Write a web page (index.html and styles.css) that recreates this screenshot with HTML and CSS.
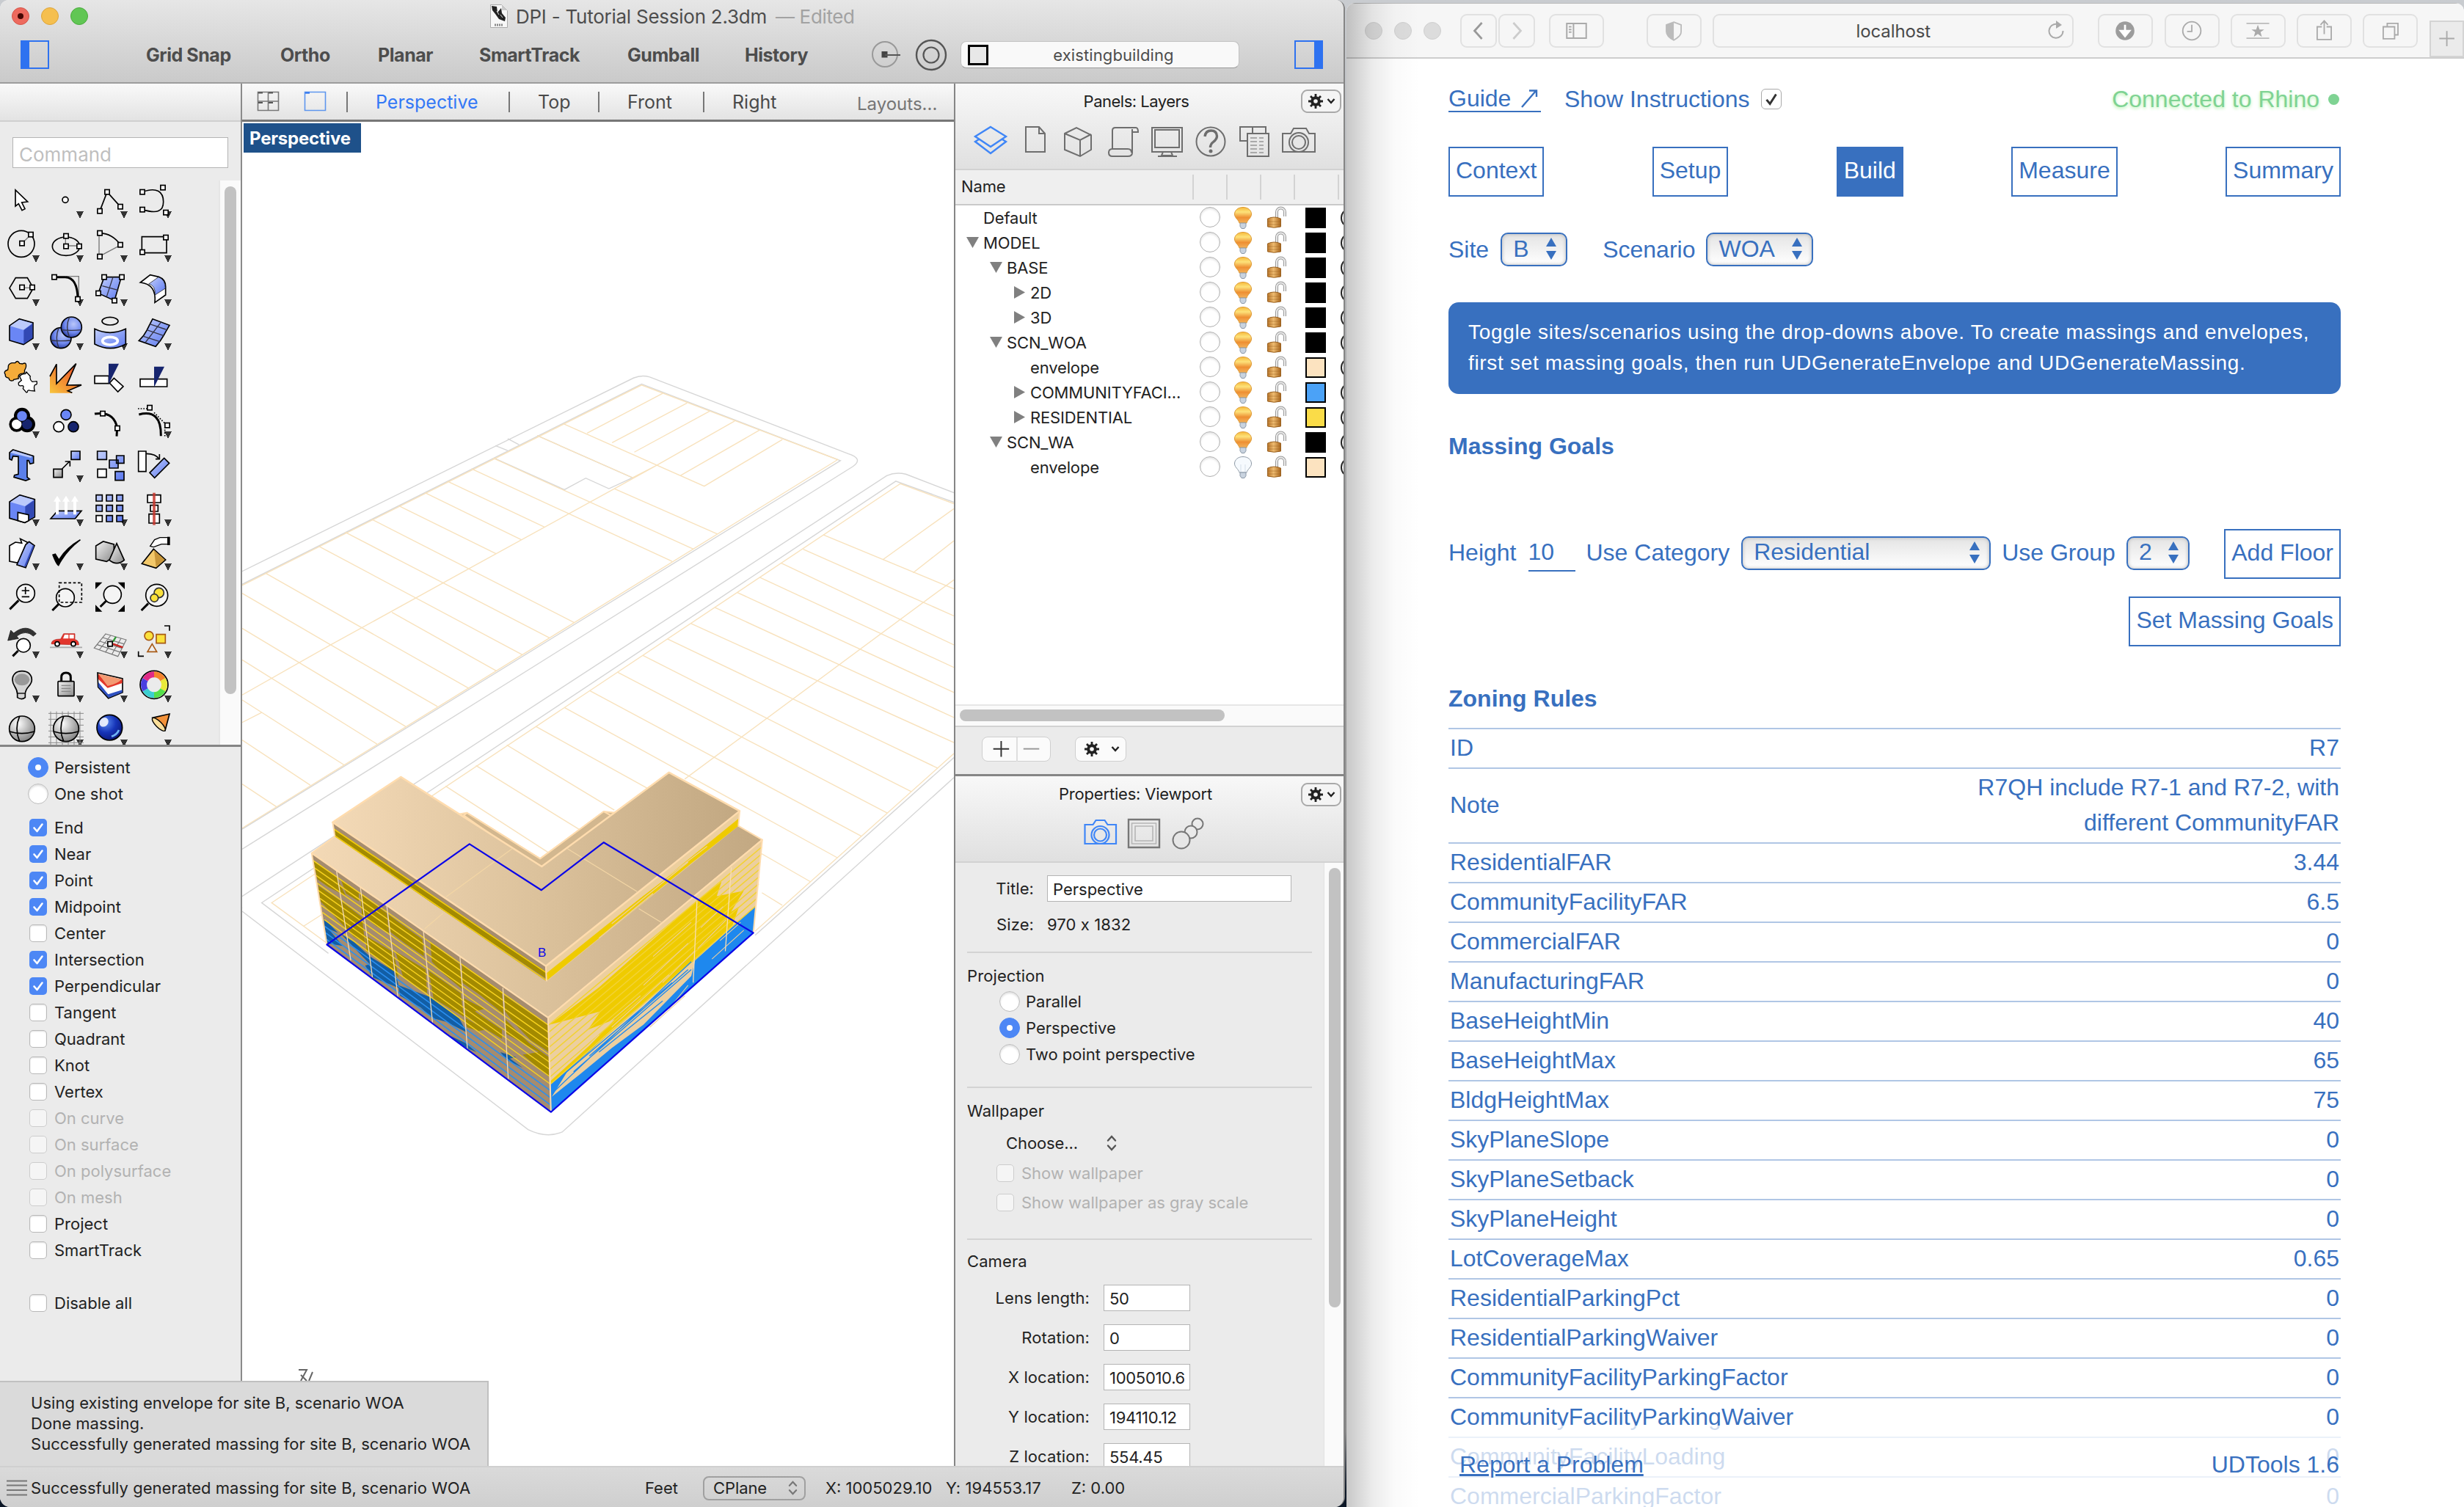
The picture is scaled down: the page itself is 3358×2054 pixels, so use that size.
FILE: index.html
```html
<!DOCTYPE html>
<html lang="en">
<head>
<meta charset="utf-8">
<title>DPI - Tutorial Session 2.3dm</title>
<link rel="stylesheet" href="styles.css">
</head>
<body>
<svg class="defs" width="0" height="0" aria-hidden="true">
  <defs>
    <linearGradient id="gBlue" x1="0" y1="0" x2="1" y2="1"><stop offset="0" stop-color="#c3cffb"/><stop offset="1" stop-color="#5b78f0"/></linearGradient>
    <radialGradient id="gBall" cx=".6" cy=".35" r=".7"><stop offset="0" stop-color="#b9c6fa"/><stop offset=".6" stop-color="#6f88ee"/><stop offset="1" stop-color="#25379a"/></radialGradient>
    <radialGradient id="gGray" cx=".35" cy=".3" r=".8"><stop offset="0" stop-color="#fff"/><stop offset="1" stop-color="#777"/></radialGradient>
    <radialGradient id="gDeep" cx=".35" cy=".3" r=".8"><stop offset="0" stop-color="#5a8bf0"/><stop offset=".5" stop-color="#1634b8"/><stop offset="1" stop-color="#0a1470"/></radialGradient>
    <linearGradient id="gFire" x1="1" y1="0" x2="0" y2="1"><stop offset=".2" stop-color="#ec5a2a"/><stop offset="1" stop-color="#f8c53c"/></linearGradient>
    <linearGradient id="gMetal" x1="0" y1="0" x2="1" y2="1"><stop offset="0" stop-color="#f4f4f4"/><stop offset="1" stop-color="#8a8a8a"/></linearGradient>
    <linearGradient id="gBulb" x1="0" y1="0" x2="0" y2="1"><stop offset="0" stop-color="#f6b93a"/><stop offset=".3" stop-color="#fde27a"/><stop offset=".65" stop-color="#ee8f33"/><stop offset="1" stop-color="#f3b25a"/></linearGradient>
    <linearGradient id="gLock" x1="0" y1="0" x2="1" y2="0"><stop offset="0" stop-color="#b8752a"/><stop offset=".45" stop-color="#eebb70"/><stop offset="1" stop-color="#a8651c"/></linearGradient>
    <linearGradient id="gRoof" x1="0" y1="0" x2="1" y2="0"><stop offset="0" stop-color="#f3d9b6"/><stop offset=".5" stop-color="#dcc29c"/><stop offset="1" stop-color="#c2a882"/></linearGradient>
    <symbol id="h" viewBox="0 0 24 24" overflow="visible"><rect x="2.5" y="2.5" width="19" height="19" fill="#fff" stroke="#000" stroke-width="5"/></symbol>
    <symbol id="gear" viewBox="0 0 20 20"><path d="M8.600 0h2.800v4H8.600zM8.600 16h2.800v4H8.600zM0 8.600h4v2.800H0zM16 8.600h4v2.800h-4zM2 4l2-2 3 3-2 2zM13 15l2-2 3 3-2 2zM2 16l3-3 2 2-3 3zM13 5l3-3 2 2-3 3z" fill="#222"/><circle cx="10" cy="10" r="4.800" fill="none" stroke="#222" stroke-width="4"/></symbol>
    <symbol id="chev" viewBox="0 0 12 10"><path d="M1.500 2l4.500 5L10.500 2" fill="none" stroke="#222" stroke-width="2.400"/></symbol>
    <symbol id="bulb" viewBox="0 0 26 32"><path d="M13 1.500C6.500 1.500 1.500 5.500 1.500 11c0 5 5.500 7.500 6.500 12h10c1-4.500 6.500-7 6.500-12 0-5.500-5-9.500-11.500-9.500z" fill="url(#gBulb)" stroke="#dd9a35"/><path d="M9 23h8v4.500l-2 3h-4l-2-3z" fill="#c9d3df" stroke="#8c99a8"/></symbol>
    <symbol id="bulboff" viewBox="0 0 26 32"><path d="M13 1.500C6.500 1.500 1.500 5.500 1.500 11c0 5 5.500 7.500 6.500 12h10c1-4.500 6.500-7 6.500-12 0-5.500-5-9.500-11.500-9.500z" fill="#f6fafe" stroke="#8f9aa6"/><path d="M9 23h8v4.500l-2 3h-4l-2-3z" fill="#c9d3df" stroke="#8c99a8"/><path d="M10 22V12M16 22V12" stroke="#d5dfe9"/></symbol>
    <symbol id="lock" viewBox="0 0 28 32"><path d="M14 16V8a5.500 5.500 0 0 1 11 0v6" fill="none" stroke="#999" stroke-width="4"/><path d="M14 16V8a5.500 5.500 0 0 1 11 0v6" fill="none" stroke="#ececec" stroke-width="2"/><path d="M1.500 17q9-4 18 0v11q-9 2.500-18 0z" fill="url(#gLock)" stroke="#9a6222"/><path d="M2 21h17M2 25h17" stroke="#9a6222" opacity=".45"/></symbol>
    <symbol id="tick" viewBox="0 0 24 24"><path d="M6.500 12.500l4 4.500 7-9.500" fill="none" stroke="#fff" stroke-width="2.600" stroke-linecap="round" stroke-linejoin="round"/></symbol>
    <symbol id="updown" viewBox="0 0 14 22"><path d="M2 7.500l5-5.500 5 5.500M2 14.500l5 5.500 5-5.500" fill="none" stroke="currentColor" stroke-width="2.400" stroke-linecap="round"/></symbol>
    <symbol id="selarrows" viewBox="0 0 16 30"><path d="M8 0l7 12H1zM8 30l7-12H1z" fill="#3870bf"/></symbol>
  </defs>
</svg>

<div class="rhino">
  <header class="titlebar">
    <div class="title-row">
      <div class="lights"><i class="red"></i><i class="amber"></i><i class="green"></i></div>
      <svg class="doc-icon" viewBox="0 0 24 32"><path d="M.5.500h15l8 8v23H.5z" fill="#f7f7f7" stroke="#aaa"/><path d="M2 2l7 1 1 8 5-6 1 7 5 6-1 5-8-3-5-7-4-5z" fill="#222"/><path d="M9 9l3 5M14 14l3 4" stroke="#ddd"/><path d="M16 1v7h7z" fill="#ccc"/><path d="M6 28h11" stroke="#888" stroke-width="3" stroke-dasharray="2 1"/></svg>
      <span class="doc-title">DPI - Tutorial Session 2.3dm</span><span class="doc-edited">— Edited</span>
    </div>
    <div class="tool-row">
      <div class="pane-toggle left"></div>
      <span class="t1">Grid Snap</span><span class="t2">Ortho</span><span class="t3">Planar</span><span class="t4">SmartTrack</span><span class="t5">Gumball</span><span class="t6">History</span>
      <svg class="rec" viewBox="0 0 104 48"><circle cx="18" cy="23" r="17" fill="none" stroke="#999" stroke-width="2"/><rect x="13.500" y="19" width="8" height="8.500" fill="#444"/><path d="M18 24h21" stroke="#555" stroke-width="2"/><circle cx="81" cy="24" r="20" fill="none" stroke="#555" stroke-width="2.400"/><circle cx="81" cy="24" r="10.500" fill="none" stroke="#555" stroke-width="2.200"/></svg>
      <div class="layer-pill"><i></i><span>existingbuilding</span></div>
      <div class="pane-toggle right"></div>
    </div>
  </header>

  <main class="workspace">
    <aside class="sidebar">
      <div class="side-head"></div>
      <div class="command"><input type="text" placeholder="Command"></div>
      <div class="palette-wrap">
        <div class="palette">
          <svg viewBox="0 40 180 180"><path class="w" d="M63 88v66l13-10 14 27 12-6-13-26 24-3z"/></svg>
          <svg class="m" viewBox="180 40 180 180"><circle class="w" cx="267" cy="128" r="12"/></svg>
          <svg class="m" viewBox="360 40 180 180"><path class="k" d="M408 174l30-78 54 60"/><use href="#h" x="396" y="162" width="24" height="24"/><use href="#h" x="426" y="84" width="24" height="24"/><use href="#h" x="480" y="144" width="24" height="24"/></svg>
          <svg class="m" viewBox="540 40 180 180"><path class="k" d="M582 96c60-22 86 0 86 40s-26 50-86 32"/><use href="#h" x="570" y="84" width="24" height="24"/><use href="#h" x="570" y="156" width="24" height="24"/><use href="#h" x="654" y="66" width="24" height="24"/><use href="#h" x="666" y="168" width="24" height="24"/></svg>

          <svg class="m" viewBox="0 220 180 180"><circle class="k" cx="87" cy="308" r="54"/><path class="g" d="M90 306l35-34"/><use href="#h" x="78" y="294" width="24" height="24"/><use href="#h" x="114" y="258" width="24" height="24"/></svg>
          <svg class="m" viewBox="180 220 180 180"><ellipse class="k" cx="270" cy="318" rx="56" ry="38"/><path class="g" d="M268 280v36h54"/><use href="#h" x="258" y="264" width="24" height="24"/><use href="#h" x="258" y="306" width="24" height="24"/><use href="#h" x="312" y="306" width="24" height="24"/></svg>
          <svg class="m" viewBox="360 220 180 180"><path class="g" d="M405 264v96l86-46"/><path class="k" d="M408 264q52 2 84 48"/><use href="#h" x="396" y="252" width="24" height="24"/><use href="#h" x="396" y="348" width="24" height="24"/><use href="#h" x="480" y="300" width="24" height="24"/></svg>
          <svg class="m" viewBox="540 220 180 180"><path class="k" d="M580 279h101v66H580z"/><use href="#h" x="570" y="330" width="24" height="24"/><use href="#h" x="666" y="270" width="24" height="24"/></svg>

          <svg class="m" viewBox="0 400 180 180"><path class="k" d="M39 489l25-42h48l24 42-24 42H64z"/><path class="g" d="M90 488h40"/><use href="#h" x="78" y="474" width="24" height="24"/><use href="#h" x="120" y="474" width="24" height="24"/></svg>
          <svg class="m" viewBox="180 400 180 180"><path class="g" d="M270 441h52v94"/><path class="k8" d="M222 444h45q50 2 51 90"/><use href="#h" x="210" y="432" width="24" height="24"/><use href="#h" x="306" y="522" width="24" height="24"/></svg>
          <svg class="m" viewBox="360 400 180 180"><path class="b" d="M426 444h70l-28 96-66-30z"/><path class="g" d="M418 480l66 18M462 444l-26 80" style="stroke:#334"/><use href="#h" x="414" y="432" width="24" height="24"/><use href="#h" x="486" y="432" width="24" height="24"/><use href="#h" x="390" y="498" width="24" height="24"/><use href="#h" x="456" y="528" width="24" height="24"/></svg>
          <svg class="m" viewBox="540 400 180 180"><path class="w" d="M574 466l40-31 35 8q28 10 28 40v34l-44 31q8-74-59-82z"/><path class="b" d="M608 472l40-28q28 10 28 46l-42 27q2-40-26-45z" style="stroke-width:2"/></svg>

          <svg class="m" viewBox="0 580 180 180"><path class="w" style="fill:#6a86f5" d="M39 643l40-28 56 16v63l-39 26-57-17z"/><path d="M41 644l38-26 53 15-36 27z" fill="#bccafb"/><path d="M97 661l36-26v58l-36 24z" fill="#3249b4"/></svg>
          <svg class="m" viewBox="180 580 180 180"><circle class="w" style="fill:url(#gBall)" cx="249" cy="693" r="42"/><circle class="w" style="fill:url(#gBall)" cx="292" cy="649" r="42"/><path class="g" d="M252 660q40 4 80 0M284 608q-18 40 0 82M208 703q40 4 80 0M240 652q-16 40 0 82" style="stroke:#334"/></svg>
          <svg class="m" viewBox="360 580 180 180"><ellipse class="k" cx="450" cy="624" rx="33" ry="16"/><path class="b" d="M387 656q62 30 127 0v62q-62 34-127 0z"/><ellipse cx="450" cy="705" rx="31" ry="16" fill="none" stroke="#fff" stroke-width="11"/></svg>
          <svg class="m" viewBox="540 580 180 180"><path class="b" d="M624 615l69 26q-12 20-24 42t-33 45l-68-24q20-18 32-42t24-47z"/><path class="g" d="M600 660l70 24M586 686l68 22M612 636l66 22M660 626l-66 86" style="stroke:#334"/></svg>

          <svg viewBox="0 760 180 180"><path class="w" style="fill:#f4ac3a;stroke-width:4" d="M62 795q10-14 18 2l12 2q18-10 14 14l-6 14q4 12-14 12-14 4-10 20l-20 4-2 4q-16 4-18-10-16-2-14-14-10-14 10-20l2-12q-2-10 14-16z"/><path class="w" style="stroke-width:4" d="M80 850q10-12 22-10l6-8 16 18q-4 12 8 22l18-2q4 14-6 14-8 6-2 26l-18-2q-12-4-12 6l-4 2-14-16q6-14-6-12-14 4-12-12l12-10z"/></svg>
          <svg viewBox="180 760 180 180"><path d="M204 848l27-50 0 82 82-83-41 90 62-1-56 24 20 8H204z" fill="url(#gFire)"/><path class="k" d="M204 850l27-50v80l80-82-38 88 60-1-56 24 18 8"/></svg>
          <svg viewBox="360 760 180 180"><path class="w" d="M387 848h58v31h-58zM466 857l38 34-22 22-34-36z"/><path d="M444 798h42l-42 84z" fill="#16246e"/></svg>
          <svg viewBox="540 760 180 180"><path class="w" d="M573 861h110v31H573z"/><path d="M630 810h42l-42 84z" fill="#16246e"/></svg>

          <svg class="m" viewBox="0 940 180 180"><g stroke="#000" stroke-width="18"><circle cx="90" cy="1011" r="24"/><circle cx="68" cy="1046" r="22"/><circle cx="111" cy="1046" r="24"/></g><circle cx="111" cy="1046" r="21" fill="#16246e"/><circle cx="68" cy="1046" r="20" fill="#fff"/><circle cx="90" cy="1012" r="22" fill="#6a86f5" stroke="#000" stroke-width="3"/></svg>
          <svg viewBox="180 940 180 180"><circle class="w" style="fill:#6a86f5" cx="270" cy="1007" r="21"/><circle class="w" cx="240" cy="1056" r="21"/><circle class="w" style="fill:#16246e" cx="300" cy="1056" r="21"/></svg>
          <svg viewBox="360 940 180 180"><path class="k8" d="M387 1003q80-12 92 58l-2 34"/><use href="#h" x="408" y="990" width="24" height="24"/><use href="#h" x="468" y="1050" width="24" height="24"/></svg>
          <svg class="m" viewBox="540 940 180 180"><path class="k8" d="M568 1006q92-24 90 88"/><path class="k" stroke-dasharray="5 6" d="M564 982h36M630 998l44 44v54"/><use href="#h" x="600" y="966" width="24" height="24"/><use href="#h" x="672" y="1038" width="24" height="24"/></svg>

          <svg viewBox="0 -50 180 180"><path class="w" style="fill:#5b80ea" d="M39-8l14-12 84 26v28l-14 4-6-14h-6v68l10 8-16 6-48-14 2-8 16-4V8L53 6 48 22l-9-4z"/><path d="M42-8l12-9 78 24-6 6z" fill="#bccafb"/></svg>
          <svg class="m" viewBox="180 -50 180 180"><path class="b" d="M291-14h36v34h-36z"/><path class="w" style="fill:url(#gMetal)" d="M219 59h36v34h-36z"/><path class="k" d="M254 58l30-30M266 28h20v20"/></svg>
          <svg viewBox="360 -50 180 180"><path class="b" d="M398-14h38v34h-38zM476 4h31v31h-31zM447 22h36v33h-36zM471 69h36v36h-36z"/><path class="w" d="M399 59h36v34h-36z"/></svg>
          <svg viewBox="540 -50 180 180"><path class="w" d="M566-14h31v83h-31z"/><path class="k" d="M598-4q40 0 52 22M636 18h16v-20"/><path class="b" d="M671 14l21 21-60 60-20-21z"/></svg>

          <svg class="m" viewBox="0 130 180 180"><path class="w" style="fill:#6a86f5" d="M39 193l42-28 61 18v72l-40 23-63-18z"/><path d="M42 194l39-26 57 17-36 26z" fill="#bccafb"/><path d="M103 212l36-25v66l-36 22z" fill="#3249b4"/><path class="w" d="M73 236l44 10v24l-16 8-28-8z"/></svg>
          <svg class="m" viewBox="180 130 180 180"><path class="b" d="M207 262l28-32h98l-26 32z"/><path d="M228 245v-53h-9l15-24 15 24h-9v53zM264 245v-53h-9l15-24 15 24h-9v53zM300 245v-53h-9l15-24 15 24h-9v53z" fill="#fff"/></svg>
          <svg class="m" viewBox="360 130 180 180"><g class="b"><path d="M393 165h25v25h-25zM435 165h25v25h-25zM477 165h25v25h-25zM393 207h25v25h-25zM435 207h25v25h-25zM477 207h25v25h-25zM435 249h25v25h-25zM477 249h25v25h-25z"/></g><path class="w" d="M393 249h25v25h-25z"/></svg>
          <svg class="m" viewBox="540 130 180 180"><g class="w"><path d="M603 165h54v31h-54zM615 207h31v25h-31zM609 243h43v37h-43z"/></g><path d="M630 156v132" stroke="#c8372d" stroke-width="11" opacity=".85"/></svg>

          <svg class="m" viewBox="0 310 180 180"><path class="w" d="M39 372l24-14 26 4-6-18 28 14v40l-40 44-32-6z"/><path class="b" d="M69 450l36-82 14-12 22 16-36 90z"/><path d="M108 455l31-80-4-6-36 88z" fill="#3249b4"/></svg>
          <svg class="m" viewBox="180 310 180 180"><path d="M213 408l14-4 14 22q30-48 86-80l3 4q-60 46-90 106-10-2-27-48z"/></svg>
          <svg class="m" viewBox="360 310 180 180"><path class="w" style="fill:url(#gMetal)" d="M392 373l30-18 44 12v50l-30 20-44-10z"/><path class="w" style="fill:url(#gMetal)" d="M477 363l31 68q-30 26-61 0z"/></svg>
          <svg class="m" viewBox="540 310 180 180"><path class="w" style="fill:#f3c96b" d="M628 386l49 44-39 34-58-18z"/><path d="M630 390l44 40-36 30z" fill="#c8963a"/><path class="w" style="stroke-width:4" d="M614 374l18-26 22-9h32v27h-26l-32 12z"/><path d="M684 336h11v34h-11z"/></svg>

          <svg viewBox="0 490 180 180"><path class="k8" d="M40 632l36-36"/><circle class="w" style="fill:#f4f4f4" cx="105" cy="567" r="37"/><path class="k" d="M89 556h31M104 541v30M89 581h31"/></svg>
          <svg viewBox="180 490 180 180"><path class="k8" d="M214 637l26-26"/><circle class="w" style="fill:#f4f4f4" cx="267" cy="585" r="37"/><path class="k" stroke-dasharray="11 8" d="M242 524h92v80h-92z"/></svg>
          <svg viewBox="360 490 180 180"><path class="k8" d="M410 622l24-24"/><circle class="w" style="fill:#f4f4f4" cx="460" cy="572" r="36"/><path d="M390 522h28l-28 28zM510 522h-28l28 28zM390 642h28l-28-28zM510 642h-28l28-28z"/></svg>
          <svg viewBox="540 490 180 180"><path class="k8" d="M578 637l28-28"/><circle class="w" style="fill:#f4f4f4" cx="641" cy="575" r="45"/><circle cx="650" cy="565" r="20" fill="#fbe13c" stroke="#333" stroke-width="5"/><circle cx="631" cy="586" r="16" fill="#fbe13c" stroke="#333" stroke-width="5"/></svg>

          <svg class="m" viewBox="0 670 180 180"><path d="M32 760l12-42 12 12q52-42 92 2l-12 10q-30-28-68 0l8 10z" fill="#333" stroke="#000" stroke-width="2"/><path class="k8" d="M52 824l22-22"/><circle class="w" cx="96" cy="780" r="28"/></svg>
          <svg class="m" viewBox="180 670 180 180"><path d="M204 788h132" stroke="#aaa" stroke-width="5"/><path d="M210 774q0-20 38-20l12-22h46v24q16 2 16 22z" fill="#e2352c" stroke="#b3201a" stroke-width="2"/><path d="M264 736h16v16h-22zM284 736h18v16h-18z" fill="#fff"/><circle class="w" cx="234" cy="774" r="9"/><circle class="w" cx="300" cy="774" r="9"/></svg>
          <svg class="m" viewBox="360 670 180 180"><path d="M432 733l84 24-34 68-97-34zM453 739l-48 60M474 745l-44 64M495 751l-38 66M420 748l86 26M408 763l89 28M397 777l92 30" fill="none" stroke="#777" stroke-width="3.500"/><path d="M474 745l-12 20" stroke="#2f9a34" stroke-width="7"/><path d="M462 774l40 14" stroke="#c8201a" stroke-width="7"/><use href="#h" x="438" y="762" width="24" height="24"/></svg>
          <svg class="m" viewBox="540 670 180 180"><g fill="#fbe13c" stroke="#a85a16" stroke-width="5"><circle cx="609" cy="741" r="18"/><path d="M639 735h37v36h-37z"/><path d="M622 774l19 32h-38z" fill="#eee"/></g><path class="k" d="M672 700h21v20M566 804v20h22"/></svg>

          <svg class="m" viewBox="0 850 180 180"><path class="w" style="fill:#d5d5d5" d="M90 885c-26 0-39 16-39 36 0 26 20 30 20 58v14q18 12 32 0v-14c0-28 27-34 27-58 0-20-14-36-40-36z"/><ellipse cx="90" cy="920" rx="31" ry="24" fill="#999"/><path d="M72 976h32" stroke="#000" stroke-width="4"/></svg>
          <svg class="m" viewBox="180 850 180 180"><path class="k8" d="M251 926v-16q0-18 19-18t19 18v16"/><rect class="w" style="fill:url(#gMetal)" x="237" y="927" width="66" height="60" rx="3"/><path d="M251 944h38M251 956h38M251 968h38" stroke="#888" stroke-width="4"/></svg>
          <svg class="m" viewBox="360 850 180 180"><path class="w" style="fill:#fff" d="M399 892l102 24v56l-58 24-42-46z"/><path d="M402 930l40 50 58-18v10l-56 22-42-44z" fill="#2e50c0"/><path d="M402 896v22l38 36 60-20v-16l-60 22z" fill="#e3382a"/><path d="M402 896l96 22q-16 18-58 28z" fill="#f39a72"/></svg>
          <svg class="m" viewBox="540 850 180 180"><circle cx="630" cy="941" r="57" stroke="#000" stroke-width="5" fill="none"/><g fill="none" stroke-width="24"><path d="M630 899a42 42 0 0 1 36 21" stroke="#f5842c"/><path d="M666 920a42 42 0 0 1 0 42" stroke="#e8ea3a"/><path d="M666 962a42 42 0 0 1-36 21" stroke="#55e04a"/><path d="M630 983a42 42 0 0 1-36-21" stroke="#3ccfd0"/><path d="M594 962a42 42 0 0 1 0-42" stroke="#4a3fe0"/><path d="M594 920a42 42 0 0 1 36-21" stroke="#e02a86"/></g></svg>

          <svg viewBox="0 1030 180 180"><circle class="w" style="fill:url(#gGray)" cx="90" cy="1121" r="52"/><path class="k" d="M39 1132q50 16 102 0M80 1070q-22 50 0 102"/></svg>
          <svg class="m" viewBox="180 1030 180 180"><path d="M198 1058h144M198 1082h144M198 1106h144M198 1130h144M198 1154h144M198 1178h144M207 1050v140M231 1050v140M255 1050v140M279 1050v140M303 1050v140M327 1050v140" stroke="#888" stroke-width="3"/><circle class="w" style="fill:url(#gGray)" cx="270" cy="1121" r="52"/><path class="k" d="M219 1132q50 16 102 0M260 1070q-22 50 0 102"/></svg>
          <svg class="m" viewBox="360 1030 180 180"><circle class="w" style="fill:url(#gDeep)" cx="448" cy="1116" r="52"/><ellipse cx="425" cy="1094" rx="17" ry="20" fill="#fff" opacity=".85" transform="rotate(40 425 1094)"/><path d="M456 1152q22-6 30-26" stroke="#6fb4f5" stroke-width="8" fill="none"/></svg>
          <svg class="m" viewBox="540 1030 180 180"><path class="w" style="fill:#f3923a" d="M623 1076l70-16-18 68q-34-8-52-52z"/><ellipse class="w" style="fill:#fbdf9a;stroke-width:4" cx="649" cy="1103" rx="36" ry="12" transform="rotate(45 649 1103)"/></svg>
        </div>
        <div class="vtrack"><i></i></div>
      </div>
      <div class="osnap">
        <label class="radio on"><i></i>Persistent</label>
        <label class="radio"><i></i>One shot</label>
        <div class="checks">
          <label class="on"><i><svg><use href="#tick"/></svg></i>End</label>
          <label class="on"><i><svg><use href="#tick"/></svg></i>Near</label>
          <label class="on"><i><svg><use href="#tick"/></svg></i>Point</label>
          <label class="on"><i><svg><use href="#tick"/></svg></i>Midpoint</label>
          <label><i></i>Center</label>
          <label class="on"><i><svg><use href="#tick"/></svg></i>Intersection</label>
          <label class="on"><i><svg><use href="#tick"/></svg></i>Perpendicular</label>
          <label><i></i>Tangent</label>
          <label><i></i>Quadrant</label>
          <label><i></i>Knot</label>
          <label><i></i>Vertex</label>
          <label class="off"><i></i>On curve</label>
          <label class="off"><i></i>On surface</label>
          <label class="off"><i></i>On polysurface</label>
          <label class="off"><i></i>On mesh</label>
          <label><i></i>Project</label>
          <label><i></i>SmartTrack</label>
          <label class="last"><i></i>Disable all</label>
        </div>
      </div>
    </aside>

    <section class="viewport">
      <nav class="tabs">
        <svg class="layouts" viewBox="0 0 144 52"><path d="M21.500 12.500h28v25h-28zM21.500 25h28M35.500 12.500v25" fill="none" stroke="#777" stroke-width="1.600"/><path d="M22 13.500h6M36 13.500h6M22 27h6M36 27h6" stroke="#555" stroke-width="2"/><path d="M85.500 12.500h28v25h-28z" fill="none" stroke="#5e96ee" stroke-width="1.600"/><path d="M86 13.500h6" stroke="#3a7df0" stroke-width="2.500"/></svg>
        <span class="v1 on">Perspective</span><span class="v2">Top</span><span class="v3">Front</span><span class="v4">Right</span><span class="v5">Layouts...</span>
      </nav>
      <div class="canvas">
        <svg class="scene" viewBox="330 166 970 1832">
          <g transform="translate(330 490) scale(.61862 .68241)" fill="none" stroke-width="1.400">
            <g stroke="#d6d6d6">
              <path class="nss" d="M0 423L862 37Q880 30 898 35L1335 188Q1370 198 1345 214L0 978"/>
              <path class="nss" d="M0 449L880 49L1318 202L0 938"/>
              <path class="nss" d="M555 197L710 260L757 237L808 258L860 236M650 152L860 236M558 172L585 182M585 158L610 170"/>
              <path class="nss" d="M1568 266L1462 229Q1440 224 1420 232L0 1072M1568 285L1440 243L43 1085L190 1186M0 1102L630 1538Q670 1556 705 1543L1568 835M0 1072Q-10 1085 0 1096M1130 1150L1568 795"/>
            </g>
            <path class="nss" stroke="#f8e2bd" d="M0 451L880 51L1312 200L0 936M0 670L195 570L495 420L720 308L820 258L912 212M52 427L500 657M169 373L618 590M227 345L677 556M285 319L731 525M345 292L560 388M403 266L615 360M452 243L667 335M505 218L947 403M553 197L995 379M820 258L1048 349M330 505L560 622M0 467L195 570L430 693M0 537L360 733M0 600L297 768M0 680L225 810M0 725L43 705M0 760L150 850M0 848L75 893M650 152L860 236L912 212M707 128L1018 253L1190 160M760 147L928 67M815 166L980 87M864 185L1030 103M912 212L1085 123M965 232L1140 141M1568 288L1450 248L65 1085L190 1168M135 1132L180 1106M975 838L1568 440M448 852L675 985M515 811L745 940M583 770L820 900M647 733L900 860L1252 1043M710 695L985 832L1311 995M765 661L1364 952M826 624L1422 906M883 591L1474 863M937 558L1532 816M988 527L1568 765M1041 495L1568 715M1090 465L1568 665M1140 435L1568 615M1188 407L1568 570M1236 379L1568 512M1280 350L1568 458M1568 298L1411 400M1568 362L1478 426M1190 1090L1145 1065M1130 1142L1568 787"/>
          </g>
          <g transform="translate(400 1000) scale(.43367 .35714)" stroke-linejoin="round">
            <path class="nss" d="M57 456L130 392L545 302L775 477L975 297L1398 352L1473 405L800 1084z" fill="url(#gRoof)" stroke="#ffdcae" stroke-width="2"/>
            <!-- left facade -->
            <path d="M57 456L800 1084L809 1444L105 805z" fill="#a58c6f"/>
            <path d="M62 484L135 546L165 620L110 585L75 555zM78 580L150 640L215 700L225 800L190 775L85 640zM210 612L293 685L300 760L260 735L215 690zM150 560L205 605L205 640L165 610zM298 690L405 785L410 850L350 800L303 755zM225 770L315 835L330 930L270 860L230 830zM430 795L522 880L530 975L470 915L435 870zM320 830L415 900L420 990L345 930zM425 905L525 990L535 1080L440 1010zM530 880L655 985L660 1070L590 1000L530 950zM535 1010L600 1050L570 1060L655 1130L655 1165L540 1080zM662 998L800 1112L803 1215L745 1170L690 1100L665 1060zM665 1090L740 1180L803 1235L803 1310L720 1225L770 1215L668 1145zM540 1085L605 1130L580 1135L545 1120z" fill="#a38a00"/>
            <path d="M95 705L140 760L110 745L155 810L105 800zM150 765L190 795L240 850L320 910L330 960L440 1010L520 1085L545 1140L480 1100L435 1085L400 1045L335 1000L330 970L250 930L225 885L240 880zM470 1140L540 1180L575 1215L545 1200zM650 1215L700 1235L680 1240L720 1275L670 1245z" fill="#125ea5"/>
            <path class="nss" stroke="#f7d21e" stroke-width="1.500" fill="none" d="M62 484L800 1111M66 512L801 1139M70 540L801 1168M74 570L802 1197M78 598L803 1225M83 628L804 1253M87 655L805 1281M91 682L806 1309M96 709L807 1337"/>
            <path class="nss" stroke="#2b8ff0" stroke-width="1.600" fill="none" d="M98 735L807 1362M101 760L808 1390M104 785L808 1417"/>
            <path class="nss" stroke="#f5dcb4" stroke-width="1.300" fill="none" d="M135 522L180 865M210 585L248 930M293 655L328 1005M408 750L437 1105M523 850L547 1210M658 970L675 1318"/>
            <!-- right facade -->
            <path d="M800 1084L1473 405L1445 760L809 1444z" fill="#eccf9f"/>
            <path d="M805 1110L960 968L1265 640L1345 565L1330 620L1415 600L1375 680L1400 660L1380 730L1270 855L1000 1130L808 1337L808 1325L930 1190L1010 1090L925 1130L965 1060L870 1090z" fill="#efcb00"/>
            <path d="M808 1337L1000 1135L960 1180L860 1290L812 1385L900 1300L1000 1200L1100 1110L1250 925L1262 865L1400 715L1453 658L1445 760L809 1444z" fill="#1e88ee"/>
            <path class="nss" stroke="#f2d233" stroke-width="1.500" fill="none" d="M802 1112L1472 432M802 1140L1470 460M803 1168L1468 488M803 1197L1466 516M804 1225L1464 545M805 1253L1462 573M806 1281L1459 601M807 1309L1456 629M808 1337L1453 657"/>
            <path class="nss" stroke="#eccf9f" stroke-width="1.100" fill="none" d="M960 1135L1090 1000M1000 1120L1180 920M1100 960L1240 800M1160 950L1260 830M1270 820L1360 710M1280 740L1350 660M1130 850L1250 720M1100 1080L1180 1000M1120 1120L1230 1000M1180 1050L1240 960M1315 860L1415 750M1340 790L1405 720M890 1230L960 1150"/>
            <path class="nss" stroke="#1e88ee" stroke-width="1.300" fill="none" d="M815 1370L1250 870M840 1310L1190 950M880 1290L1250 900M930 1230L1240 900M960 1215L1160 1020"/>
            <path class="nss" stroke="#f8deb4" stroke-width="1.300" fill="none" d="M1376 510L1357 830M1268 640L1256 950"/>
            <!-- upper storey -->
            <path d="M123 338L793 887L795 945L130 392z" fill="#a58c6f"/>
            <path d="M127 362L793 908L795 935L440 650L130 388z" fill="#a38a00"/>
            <path class="nss" d="M127 364L794 912M130 390L795 942" fill="none" stroke="#f2cd10" stroke-width="1.600"/>
            <path d="M793 887L1402 295L1398 352L795 945z" fill="#eccf9f"/>
            <path d="M794 915L1190 530L1400 323L1398 352L1250 495L795 943z" fill="#efcb00"/>
            <path class="nss" d="M1000 725L1240 490M1020 690L1300 430M960 780L1130 610" stroke="#eccf9f" stroke-width="1.300"/>
            <path class="nss" d="M535 312L545 302L775 477L975 297L997 312L780 520z" fill="#d2b78f" stroke="#ffdcae" stroke-width="2"/>
            <path class="nss" d="M123 338L337 165L780 507L1180 148L1402 295L793 887z" fill="url(#gRoof)" stroke="#ffdcae" stroke-width="2.500"/>
            <path class="nss" d="M57 456L800 1084L1473 405L1445 760M800 1084L809 1444M57 456L105 805M793 887L795 945M123 338L130 392M1402 295L1398 352" fill="none" stroke="#ffdcae" stroke-width="2"/>
            <path class="nss" d="M688 438L480 622M470 685L412 745M860 438L1080 603M1085 668L1158 722" fill="none" stroke="#f3d6a5" stroke-width="1.200"/>
            <path class="nss" d="M105 805L553 421L779 597L975 415L1445 760L809 1444z" fill="none" stroke="#0b06e8" stroke-width="2.200"/>
          </g>
          <text x="733" y="1304" class="site-tag">B</text>
          <path d="M407 1867h11l-8 15M410 1874l8 8M426 1870l-5 12" fill="none" stroke="#666" stroke-width="2"/>
        </svg>
        <span class="view-label">Perspective</span>
      </div>
    </section>

    <aside class="panels">
      <div class="panel-head">
        <div class="panel-title"><span>Panels: Layers</span><button class="gearbtn"><svg class="ge"><use href="#gear"/></svg><svg class="ch"><use href="#chev"/></svg></button></div>
        <svg class="panel-icons" viewBox="0 0 480 50" fill="none" stroke="#6e6e6e" stroke-width="2">
          <path d="M30 5l21 13-21 14L9 18zM14 22l-5 3 21 16 21-16-5-3" stroke="#3f86f7" stroke-width="2.400"/>
          <path d="M78 5h18l8 9v25H78zM96 5v9h8"/>
          <path d="M131 14l16-8 20 10v20l-15 9-21-9zM131 14l21 9 15-8M152 23v22"/>
          <path d="M196 35V10q0-4 4-4h28q3 0 3 6h-8V40q0 5-6 5h-21q-5 0-5-5t5-5h21q5 0 5 5M223 12V8"/>
          <path d="M250 6h41v33h-41zM254 9h33v24h-33zM265 39h11l2 5h-15zM258 45h26"/>
          <circle cx="330" cy="25" r="19.500"/><path d="M322 18q1-8 8.500-8t8 7.500q0 4-5 8-4 3-4 7.500" stroke-width="3.400"/><circle cx="330" cy="38" r="1.500" fill="#666"/>
          <path d="M380 24h-10V5h35v9M387 5v9M380 14h29v31h-29z"/><path d="M384 20h21M384 25h21M384 30h21M384 35h21M384 40h21" stroke="#aaa" stroke-dasharray="9 3 6 3"/>
          <path d="M428 14h11l4-7h17l4 7h8v25h-44z"/><circle cx="450" cy="26" r="13" fill="#e6e6e6"/><circle cx="450" cy="26" r="9"/>
        </svg>
      </div>
      <div class="layer-grid head"><span>Name</span><b></b><b></b><b></b><b></b><b></b></div>
      <div class="layers">
        <div class="layer-grid l0"><span><s></s>Default</span><i></i><svg class="bu"><use href="#bulb"/></svg><svg class="lo"><use href="#lock"/></svg><em></em><u></u></div>
        <div class="layer-grid l0"><span><s class="open"></s>MODEL</span><i></i><svg class="bu"><use href="#bulb"/></svg><svg class="lo"><use href="#lock"/></svg><em></em><u></u></div>
        <div class="layer-grid l1"><span><s class="open"></s>BASE</span><i></i><svg class="bu"><use href="#bulb"/></svg><svg class="lo"><use href="#lock"/></svg><em></em><u></u></div>
        <div class="layer-grid l2"><span><s class="shut"></s>2D</span><i></i><svg class="bu"><use href="#bulb"/></svg><svg class="lo"><use href="#lock"/></svg><em></em><u></u></div>
        <div class="layer-grid l2"><span><s class="shut"></s>3D</span><i></i><svg class="bu"><use href="#bulb"/></svg><svg class="lo"><use href="#lock"/></svg><em></em><u></u></div>
        <div class="layer-grid l1"><span><s class="open"></s>SCN_WOA</span><i></i><svg class="bu"><use href="#bulb"/></svg><svg class="lo"><use href="#lock"/></svg><em></em><u></u></div>
        <div class="layer-grid l2"><span><s></s>envelope</span><i></i><svg class="bu"><use href="#bulb"/></svg><svg class="lo"><use href="#lock"/></svg><em class="tan"></em><u></u></div>
        <div class="layer-grid l2"><span><s class="shut"></s>COMMUNITYFACI...</span><i></i><svg class="bu"><use href="#bulb"/></svg><svg class="lo"><use href="#lock"/></svg><em class="blue"></em><u></u></div>
        <div class="layer-grid l2"><span><s class="shut"></s>RESIDENTIAL</span><i></i><svg class="bu"><use href="#bulb"/></svg><svg class="lo"><use href="#lock"/></svg><em class="yellow"></em><u></u></div>
        <div class="layer-grid l1"><span><s class="open"></s>SCN_WA</span><i></i><svg class="bu"><use href="#bulb"/></svg><svg class="lo"><use href="#lock"/></svg><em></em><u></u></div>
        <div class="layer-grid l2"><span><s></s>envelope</span><i></i><svg class="bu"><use href="#bulboff"/></svg><svg class="lo"><use href="#lock"/></svg><em class="tan"></em><u></u></div>
      </div>
      <div class="hscroll"><i></i></div>
      <div class="layer-tools">
        <div class="seg"><svg viewBox="0 0 94 34"><path d="M26 5v22M15 16h22" stroke="#333" stroke-width="2"/><path d="M57 16h22" stroke="#999" stroke-width="2"/><path d="M48 0v34" stroke="#ddd" stroke-width="2"/></svg></div>
        <div class="gearwide"><svg class="ge"><use href="#gear"/></svg><svg class="ch"><use href="#chev"/></svg></div>
      </div>
      <div class="prop-head">
        <div class="panel-title"><span>Properties: Viewport</span><button class="gearbtn"><svg class="ge"><use href="#gear"/></svg><svg class="ch"><use href="#chev"/></svg></button></div>
        <svg class="prop-icons" viewBox="0 0 166 46" fill="none"><g stroke="#3f86f7" stroke-width="2.200"><path d="M1.500 8h11l4-6h12l4 6h11.500v26h-42.500z"/><circle cx="22.500" cy="22" r="12" fill="#e8e8e8"/><circle cx="22.500" cy="22" r="8.500"/></g><path d="M61 1h42v38H61z" stroke="#777" stroke-width="2.400"/><path d="M65.500 6h33v28h-33zM70 10h24v20H70z" stroke="#b5b5b5" stroke-width="1.600"/><g stroke="#777" stroke-width="2"><circle cx="155" cy="7" r="7.500"/><circle cx="146" cy="18" r="8.500" fill="#eaeaea"/><circle cx="133" cy="29" r="11.500" fill="#e6e6e6"/></g></svg>
      </div>
      <div class="prop-wrap">
        <div class="props">
          <div class="row title"><label>Title:</label><input type="text" value="Perspective"></div>
          <div class="row size"><label>Size:</label><span>970 x 1832</span></div>
          <section class="s1"><h3>Projection</h3>
            <label class="radio"><i></i>Parallel</label>
            <label class="radio on"><i></i>Perspective</label>
            <label class="radio"><i></i>Two point perspective</label>
          </section>
          <section class="s2"><h3>Wallpaper</h3>
            <div class="choose"><span>Choose...</span><svg><use href="#updown"/></svg></div>
            <label class="chk"><i></i>Show wallpaper</label>
            <label class="chk"><i></i>Show wallpaper as gray scale</label>
          </section>
          <section class="s3"><h3>Camera</h3>
            <div class="cam"><label>Lens length:</label><input type="text" value="50"></div>
            <div class="cam"><label>Rotation:</label><input type="text" value="0"></div>
            <div class="cam"><label>X location:</label><input type="text" value="1005010.6"></div>
            <div class="cam"><label>Y location:</label><input type="text" value="194110.12"></div>
            <div class="cam"><label>Z location:</label><input type="text" value="554.45"></div>
          </section>
        </div>
        <div class="ptrack"><i></i></div>
      </div>
    </aside>
  </main>

  <footer class="status">
    <svg class="burger" viewBox="0 0 30 22"><path d="M1 1.500h28M1 7.500h28M1 14h28M1 20.500h28" stroke="#777" stroke-width="1.800"/></svg>
    <span class="msg">Successfully generated massing for site B, scenario WOA</span>
    <span class="feet">Feet</span>
    <span class="cplane">CPlane<svg><use href="#updown"/></svg></span>
    <span class="cx">X: 1005029.10</span><span class="cy">Y: 194553.17</span><span class="cz">Z: 0.00</span>
  </footer>
  <div class="history"><p>Using existing envelope for site B, scenario WOA</p><p>Done massing.</p><p>Successfully generated massing for site B, scenario WOA</p></div>
</div>

<div class="safari">
  <header class="chrome">
    <div class="dots"><i></i><i></i><i></i></div>
    <div class="btn nav"><svg viewBox="0 0 50 46"><path d="M30 11L19 23l11 12" fill="none" stroke="#999" stroke-width="3"/></svg></div>
    <div class="btn nav fwd"><svg viewBox="0 0 50 46"><path d="M20 11l11 12-11 12" fill="none" stroke="#ccc" stroke-width="3"/></svg></div>
    <div class="btn sb"><svg viewBox="0 0 75 46"><path d="M23 12h29v22H23zM33 12v22M26 17h4M26 21h4M26 25h4" fill="none" stroke="#aaa" stroke-width="2.200"/></svg></div>
    <div class="btn sh"><svg viewBox="0 0 75 46"><path d="M37 10l11 4v10q0 7-11 13-11-6-11-13V14z" fill="none" stroke="#bbb" stroke-width="2"/><path d="M37 10v27q-11-6-11-13V14z" fill="#bbb"/></svg></div>
    <div class="url"><span>localhost</span><svg viewBox="0 0 24 28"><path d="M14 5A9.500 9.500 0 1 0 21.500 14" fill="none" stroke="#aaa" stroke-width="2"/><path d="M12 0l8 6-8 5z" fill="#aaa"/></svg></div>
    <div class="btn b1"><svg viewBox="0 0 75 46"><circle cx="37" cy="23" r="14" fill="#9c9c9c"/><path d="M37 14v13M30.500 23l6.500 8 6.500-8z" stroke="#fff" stroke-width="3" fill="#fff"/></svg></div>
    <div class="btn"><svg viewBox="0 0 75 46" fill="none" stroke="#aaa" stroke-width="2"><circle cx="37" cy="23" r="13.500"/><path d="M37 14v10h-7"/></svg></div>
    <div class="btn"><svg viewBox="0 0 75 46"><path d="M20 12h34M20 34h34" stroke="#bbb" stroke-width="2"/><path d="M37 14l2.500 7h7l-5.500 4 2 7-6-4.300-6 4.300 2-7-5.500-4h7z" fill="#aaa"/></svg></div>
    <div class="btn"><svg viewBox="0 0 75 46" fill="none" stroke="#aaa" stroke-width="2"><path d="M34 17h-7v19h21V17h-7M37.500 28V8M32 14l5.500-6 5.500 6"/></svg></div>
    <div class="btn"><svg viewBox="0 0 75 46" fill="none" stroke="#aaa" stroke-width="2"><path d="M27 17h17v18H27zM33 17v-5h16v17h-5"/></svg></div>
    <div class="newtab"><svg viewBox="0 0 46 50"><path d="M23 13v22M12 24h22" stroke="#aaa" stroke-width="2"/></svg></div>
  </header>
  <div class="page">
    <div class="top"><a class="guide">Guide <svg viewBox="0 0 26 26"><path d="M3 25L22 3M13 2.500h10V11" fill="none" stroke="#3870bf" stroke-width="2.400"/></svg></a><span class="instr">Show Instructions</span><i class="tickbox"><svg viewBox="0 0 28 27"><path d="M7 15l5 6 9-14" fill="none" stroke="#333" stroke-width="3.200"/></svg></i><span class="connected">Connected to Rhino <i></i></span></div>
    <nav class="steps"><a>Context</a><a>Setup</a><a class="on">Build</a><a>Measure</a><a>Summary</a></nav>
    <div class="pickers"><label>Site</label><span class="sel site">B<svg><use href="#selarrows"/></svg></span><label class="sc">Scenario</label><span class="sel scen">WOA<svg><use href="#selarrows"/></svg></span></div>
    <p class="notice">Toggle sites/scenarios using the drop-downs above. To create massings and envelopes,<br>first set massing goals, then run UDGenerateEnvelope and UDGenerateMassing.</p>
    <h2 class="goals">Massing Goals</h2>
    <div class="floor"><label>Height</label><span class="num">10</span><label>Use Category</label><span class="sel cat">Residential<svg><use href="#selarrows"/></svg></span><label>Use Group</label><span class="sel grp">2<svg><use href="#selarrows"/></svg></span><a class="box">Add Floor</a></div>
    <div class="setrow"><a class="box">Set Massing Goals</a></div>
    <h2 class="zoning">Zoning Rules</h2>
    <dl class="rules">
      <div><dt>ID</dt><dd>R7</dd></div>
      <div><dt>Note</dt><dd>R7QH include R7-1 and R7-2, with<br>different CommunityFAR</dd></div>
      <div><dt>ResidentialFAR</dt><dd>3.44</dd></div>
      <div><dt>CommunityFacilityFAR</dt><dd>6.5</dd></div>
      <div><dt>CommercialFAR</dt><dd>0</dd></div>
      <div><dt>ManufacturingFAR</dt><dd>0</dd></div>
      <div><dt>BaseHeightMin</dt><dd>40</dd></div>
      <div><dt>BaseHeightMax</dt><dd>65</dd></div>
      <div><dt>BldgHeightMax</dt><dd>75</dd></div>
      <div><dt>SkyPlaneSlope</dt><dd>0</dd></div>
      <div><dt>SkyPlaneSetback</dt><dd>0</dd></div>
      <div><dt>SkyPlaneHeight</dt><dd>0</dd></div>
      <div><dt>LotCoverageMax</dt><dd>0.65</dd></div>
      <div><dt>ResidentialParkingPct</dt><dd>0</dd></div>
      <div><dt>ResidentialParkingWaiver</dt><dd>0</dd></div>
      <div><dt>CommunityFacilityParkingFactor</dt><dd>0</dd></div>
      <div><dt>CommunityFacilityParkingWaiver</dt><dd>0</dd></div>
      <div><dt>CommunityFacilityLoading</dt><dd>0</dd></div>
      <div><dt>CommercialParkingFactor</dt><dd>0</dd></div>
    </dl>
  </div>
  <footer class="foot"><a>Report a Problem</a><span>UDTools 1.6</span></footer>
</div>
</body>
</html>
```
FILE: styles.css
```css
* { box-sizing: border-box; }
body { margin: 0; width: 3358px; height: 2054px; display: flex; gap: 2px; overflow: hidden; background: linear-gradient(#c9ccd0, #9a9a9a 40%, #888 95%, #0b1626 99%); font-family: Inter, "Noto Sans", sans-serif; font-size: 22px; color: #222; }
.defs { position: absolute; }
i, em { font-style: normal; }
svg { display: block; }
input { font: inherit; color: inherit; outline: 0; border-radius: 0; margin: 0; }
p, h2, h3, dl, dd { margin: 0; font-weight: normal; font-size: inherit; }
a { text-decoration: none; }

/* Rhino window */
.rhino { position: relative; width: 1833px; height: 2054px; flex: none; display: flex; flex-direction: column; background: #ebebeb; border-radius: 12px 12px 14px 14px; overflow: hidden; border-right: 2px solid #858585; }
.titlebar { height: 114px; flex: none; background: linear-gradient(#e6e6e6, #cacaca); border-bottom: 2px solid #9d9d9d; color: #4d4d4d; }
.title-row { height: 44px; display: flex; align-items: center; font-size: 26px; }
.lights { display: flex; gap: 16px; padding-left: 16px; width: 668px; }
.lights i { width: 24px; height: 24px; border-radius: 50%; display: grid; place-items: center; }
.red { background: #ed6a5e; border: 1px solid #d5554a; }
.red::after { content: ""; width: 8px; height: 8px; border-radius: 50%; background: #460804; }
.amber { background: #f5bf4f; border: 1px solid #dca43c; }
.green { background: #61c654; border: 1px solid #4aab3d; }
.doc-icon { width: 24px; height: 32px; margin-right: 11px; }
.doc-title { width: 354px; white-space: nowrap; letter-spacing: -.25px; padding-top: 1px; }
.doc-edited { color: #a2a2a2; white-space: nowrap; letter-spacing: -.35px; padding-top: 1px; }
.tool-row { display: flex; align-items: center; height: 61px; font-size: 25px; font-weight: 650; white-space: nowrap; }
.pane-toggle { width: 39px; height: 39px; border: 2px solid #2e72f0; }
.pane-toggle.left { margin: 0 132px 0 28px; border-left-width: 12px; }
.pane-toggle.right { margin-left: 75px; border-right-width: 12px; }
.tool-row span { letter-spacing: -.45px; padding-top: 1px; }
.t1 { width: 183px; } .t2 { width: 133px; } .t3 { width: 138px; } .t4 { width: 202px; } .t5 { width: 160px; } .t6 { width: 173px; }
.rec { width: 104px; height: 48px; margin-right: 17px; flex: none; }
.layer-pill { width: 380px; height: 37px; border-radius: 8px; background: #f9f9f9; border: 1px solid #c2c2c2; border-bottom-color: #999; display: flex; align-items: center; }
.layer-pill i { width: 28px; height: 28px; border: 3px solid #000; background: #e8e8e8; margin-left: 9px; }
.tool-row .layer-pill span { flex: 1; text-align: center; margin-left: 0; font-weight: 400; font-size: 22px; letter-spacing: .1px; }

.workspace { flex: 1; display: flex; min-height: 0; }
.sidebar { width: 330px; border-right: 2px solid #8a8a8a; display: flex; flex-direction: column; }
.side-head { height: 52px; background: linear-gradient(#f9f9f9, #e3e3e3); border-bottom: 2px solid #cfcfcf; }
.command { padding: 21px 0 0 17px; height: 80px; }
.command input { width: 294px; height: 42px; border: 1.500px solid #b4b4b4; background: #fff; padding: 5px 8px 0; font-size: 26px; }
.command input::placeholder { color: #bfbfbf; opacity: 1; }
.palette-wrap { height: 769px; display: flex; overflow: hidden; }
.palette { width: 298px; display: grid; grid-template-columns: repeat(4, 60px); grid-auto-rows: 60px; align-content: start; margin-top: -3px; }
.palette svg { width: 60px; height: 60px; }
.palette .w { fill: #fff; stroke: #000; stroke-width: 5; }
.palette .k { fill: none; stroke: #000; stroke-width: 5; }
.palette .k8 { fill: none; stroke: #000; stroke-width: 9; }
.palette .g { fill: none; stroke: #777; stroke-width: 4; }
.palette .b { fill: url(#gBlue); stroke: #000; stroke-width: 5; }
.palette .m { background: conic-gradient(from -27deg at 50% 100%, #333 54deg, transparent 0) 44px 45px / 10px 10px no-repeat; }
.vtrack { width: 30px; background: #fafafa; border-left: 2px solid #e6e6e6; padding: 8px 0 0 6px; }
.vtrack i { display: block; width: 16px; height: 692px; border-radius: 8px; background: #c2c2c2; }
.osnap { border-top: 3px solid #858585; padding: 10px 0 0 38px; flex: 1; }
.radio { display: flex; align-items: center; height: 36px; gap: 8px; white-space: nowrap; }
.radio i { width: 28px; height: 28px; border-radius: 50%; background: #fff; border: 1px solid #bdbdbd; box-shadow: inset 0 2px 3px #ddd; display: grid; place-items: center; }
.radio.on i { background: #4d87f5; border-color: #4d87f5; box-shadow: none; }
.radio.on i::after { content: ""; width: 8px; height: 8px; border-radius: 50%; background: #fff; }
.osnap label { letter-spacing: 0; }
.checks { margin: 10px 0 0 2px; }
.checks label { display: flex; align-items: center; height: 36px; gap: 10px; white-space: nowrap; }
.checks i, .chk i { width: 24px; height: 24px; border-radius: 5px; background: #fff; border: 1px solid #b9b9b9; box-shadow: inset 0 1px 2px #ddd; }
.checks .on i { background: #4d87f5; border: 0; box-shadow: none; }
.checks .on svg { width: 24px; height: 24px; }
.checks .off, .chk { color: #b2b2b2; }
.checks .off i, .chk i { background: #f5f5f5; border-color: #cdcdcd; box-shadow: none; }
.checks .last { margin-top: 36px; }

.viewport { width: 970px; display: flex; flex-direction: column; background: #fff; }
.tabs { height: 52px; background: linear-gradient(#f9f9f9, #e3e3e3); border-bottom: 3px solid #777; display: flex; align-items: center; font-size: 25px; color: #4a4a4a; white-space: nowrap; }
.layouts { width: 144px; height: 52px; }
.tabs span { height: 28px; line-height: 29px; border-left: 2px solid #777; padding-left: 38px; letter-spacing: 0; }
.tabs .on { color: #3478f6; }
.v1 { width: 221px; margin-left: -2px; } .v2 { width: 122px; } .v3 { width: 143px; } .v4 { width: 210px; }
.tabs .v5 { border: 0; padding: 2px 0 0; color: #757575; font-size: 24px; }
.canvas { position: relative; flex: 1; overflow: hidden; }
.scene { width: 970px; height: 1832px; }
.nss { vector-effect: non-scaling-stroke; }
.site-tag { font: 17px "Liberation Sans", sans-serif; fill: #0b06e8; }
.view-label { position: absolute; left: 2px; top: 2px; width: 160px; height: 40px; background: #1e518a; color: #fff; font-weight: 700; font-size: 24px; line-height: 42px; padding-left: 8px; letter-spacing: -.2px; }

.panels { width: 531px; border-left: 2px solid #858585; display: flex; flex-direction: column; overflow: hidden; }
.panel-head { height: 118px; flex: none; background: linear-gradient(#f8f8f8, #e0e0e0); border-bottom: 2px solid #d2d2d2; }
.panel-title { display: flex; align-items: center; height: 48px; }
.panel-title span { flex: 1; text-align: center; padding-left: 22px; letter-spacing: -.5px; color: #1e1e1e; }
.gearbtn { width: 55px; height: 32px; border-radius: 9px; border: 2px solid #a9a9a9; background: #f4f4f4; display: flex; align-items: center; padding: 0 0 0 8px; gap: 5px; margin-right: 3px; }
.ge { width: 20px; height: 20px; } .ch { width: 12px; height: 10px; }
.panel-icons { width: 480px; height: 50px; margin: 6px 0 0 18px; }
.layer-grid { display: grid; grid-template-columns: 323px 46px 46px 46px 60px 8px; align-items: center; height: 34px; }
.head { height: 48px; flex: none; background: #efefef; border-bottom: 2px solid #c9c9c9; }
.head span { padding: 0 0 2px 8px; }
.head b { height: 34px; border-left: 2px solid #d3d3d3; }
.layers { height: 680px; flex: none; background: #fff; overflow: hidden; }
.layer-grid span { display: flex; align-items: center; white-space: nowrap; letter-spacing: -.15px; }
.layers span { padding-bottom: 1px; }
.l0 span { padding-left: 15px; } .l1 span { padding-left: 47px; } .l2 span { padding-left: 79px; }
.layers s { width: 23px; height: 17px; flex: none; }
.layers .open { background: #808080; clip-path: polygon(0 1px, 17px 1px, 8.500px 16px); }
.layers .shut { background: #808080; clip-path: polygon(1px 0, 16px 8.500px, 1px 17px); }
.layer-grid > i { width: 28px; height: 28px; border-radius: 50%; border: 1.500px solid #b0b0b0; margin: -2px 0 0 10px; box-shadow: inset 0 2px 3px #e4e4e4; }
.bu { width: 26px; height: 32px; margin-left: 10px; } .lo { width: 28px; height: 32px; margin-left: 9px; }
.layer-grid em { width: 28px; height: 28px; margin: -1px 0 0 16px; background: #000; border: 2px solid #000; }
.layer-grid .tan { background: #fce3c0; } .layer-grid .blue { background: #4ba2f7; } .layer-grid .yellow { background: #fadc48; }
.layers u { width: 28px; height: 28px; border-radius: 50%; border: 2px solid #222; margin-left: 4px; }
.hscroll { height: 31px; flex: none; background: #fafafa; border-top: 2px solid #e6e6e6; border-bottom: 2px solid #d2d2d2; padding: 5px 6px; }
.hscroll i { display: block; width: 361px; height: 16px; border-radius: 8px; background: #c2c2c2; }
.layer-tools { height: 64px; flex: none; display: flex; padding: 13px 0 0 36px; gap: 33px; }
.seg, .gearwide { height: 34px; border-radius: 8px; background: #fbfbfb; border: 1px solid #cfcfcf; }
.seg { width: 94px; } .gearwide { width: 70px; display: flex; align-items: center; padding-left: 12px; gap: 16px; }
.prop-head { height: 121px; flex: none; background: linear-gradient(#f8f8f8, #e0e0e0); border-top: 3px solid #858585; border-bottom: 2px solid #d2d2d2; }
.prop-head .panel-title { height: 50px; }
.prop-head .panel-title span { letter-spacing: -.2px; padding: 0 0 2px 20px; }
.prop-icons { width: 166px; height: 46px; margin: 8px 0 0 175px; overflow: visible; }
.prop-wrap { flex: 1; display: flex; min-height: 0; overflow: hidden; }
.props { width: 502px; }
.ptrack { width: 27px; background: #fafafa; border-left: 1px solid #e2e2e2; padding: 7px 0 0 6px; }
.ptrack i { display: block; width: 16px; height: 599px; border-radius: 8px; background: #c2c2c2; }
.props input { height: 36px; border: 1.500px solid #b4b4b4; background: #fff; padding: 1px 7px 0; }
.row { display: flex; align-items: center; height: 36px; letter-spacing: .1px; }
.row label { width: 107px; text-align: right; margin-right: 18px; }
.row.title { margin-top: 17px; } .row.title input { width: 333px; }
.row.size { margin: 13px 0 19px; }
.props section { margin: 0 16px; border-top: 2px solid #d3d3d3; }
.props h3 { height: 36px; line-height: 36px; letter-spacing: .1px; }
.s1 { height: 184px; padding-top: 13px; } .s1 .radio { margin-left: 44px; }
.s1 h3 { margin-bottom: -1px; } .s1 .radio { gap: 8px; }
.s2 { height: 207px; padding-top: 13px; }
.choose { display: flex; align-items: center; height: 40px; padding-left: 53px; margin-top: 6px; }
.choose span { width: 137px; letter-spacing: -.1px; } .choose svg { width: 14px; height: 22px; color: #555; }
.chk { display: flex; align-items: center; gap: 10px; height: 40px; margin: 1px 0 -1px 40px; letter-spacing: 0; }
.s3 { padding-top: 11px; } .s3 h3 { margin-bottom: 14px; }
.cam { display: flex; height: 36px; align-items: center; margin-bottom: 18px; letter-spacing: .1px; }
.cam label { width: 167px; text-align: right; margin-right: 19px; }
.cam input { width: 118px; letter-spacing: -.3px; }

.status { height: 56px; flex: none; background: linear-gradient(#dadada, #cfcfcf); border-top: 2px solid #d0d0d0; display: flex; align-items: center; white-space: nowrap; padding-top: 2px; }
.burger { width: 30px; height: 22px; margin-left: 8px; }
.msg { width: 837px; margin-left: 4px; letter-spacing: .03px; } .feet { width: 79px; }
.cplane { width: 140px; height: 33px; border: 2px solid #a0a0a0; border-radius: 8px; display: flex; align-items: center; justify-content: space-between; padding: 0 9px 0 12px; letter-spacing: -.1px; }
.cplane svg { width: 13px; height: 20px; color: #777; }
.cx { margin-left: 27px; width: 164px; letter-spacing: 0; } .cy { width: 171px; letter-spacing: .1px; }
.history { position: absolute; left: 0; bottom: 56px; width: 666px; height: 116px; background: #dadada; border-top: 2px solid #c0c0c0; border-right: 2px solid #c0c0c0; padding: 14px 0 0 42px; line-height: 28px; white-space: nowrap; letter-spacing: .03px; }

/* Browser window */
.safari { position: relative; flex: 1; margin-top: 4px; background: #fff; border-radius: 12px 12px 0 0; overflow: hidden; display: flex; flex-direction: column; }
.safari::before { content: ""; position: absolute; z-index: 2; left: 0; top: 0; bottom: 0; width: 100px; background: linear-gradient(90deg, rgba(0,0,0,.22), rgba(0,0,0,.08) 35%, rgba(0,0,0,.02) 65%, transparent); }
.chrome { height: 76px; flex: none; background: #f6f6f6; border-bottom: 2px solid #cdcdcd; border-top: 1px solid #bbb; display: flex; align-items: center; }
.dots { display: flex; gap: 16px; margin: 0 26px 0 25px; }
.dots i { width: 24px; height: 24px; border-radius: 50%; background: #dcdcdc; border: 1px solid #cfcfcf; }
.btn, .url { height: 46px; border: 2px solid #e1e1e1; border-radius: 9px; flex: none; margin-top: 1px; }
.btn { width: 75px; margin-right: 15.300px; }
.btn svg { width: 100%; height: 42px; }
.btn.nav { width: 50px; margin-right: 2px; }
.btn.fwd { margin-right: 19px; } .btn.sb { margin-right: 58px; }
.url { width: 492px; margin-right: 33px; display: flex; align-items: center; font-size: 24px; color: #4a4a4a; }
.url span { flex: 1; text-align: center; padding-left: 34px; letter-spacing: -.1px; }
.url svg { width: 24px; height: 28px; margin-right: 10px; }
.newtab { width: 48px; height: 50px; background: #ebebeb; border: 2px solid #d4d4d4; align-self: flex-end; }
.page, .foot { font-family: "Liberation Sans", Arial, sans-serif; font-size: 32px; color: #3870bf; }
.page { width: 1216px; margin-left: 139px; flex: 1; min-height: 0; }
.top { display: flex; align-items: center; height: 40px; margin-top: 35px; }
.guide { width: 126px; display: flex; align-items: center; gap: 12px; height: 35px; border-bottom: 2.500px solid #3870bf; }
.guide svg { width: 26px; height: 26px; }
.instr { margin: 0 15px 0 32px; }
.tickbox { width: 28px; height: 28px; border: 1.500px solid #aaa; border-radius: 6px; }
.connected { margin-left: auto; color: #7fd393; display: flex; align-items: center; gap: 12px; text-shadow: 0 2px 4px #b6f2b0; margin-right: 2px; }
.connected i { width: 15px; height: 15px; border-radius: 50%; background: #7fd393; }
.steps { display: flex; justify-content: space-between; margin-top: 45px; }
.steps a, .box { height: 68px; border: 2px solid #3870bf; padding: 0 8px; line-height: 61px; white-space: nowrap; }
.steps .on { background: #3870bf; color: #fff; }
.pickers { display: flex; align-items: center; margin-top: 49px; height: 46px; line-height: 42px; }
.pickers label { margin-top: -1px; }
.sel { height: 46px; border: 2.500px solid #3870bf; border-radius: 10px; background: linear-gradient(#e4e4e4, #fff); box-shadow: inset 0 0 5px #b5b5b5; display: flex; align-items: center; justify-content: space-between; padding: 0 12px 3px 15px; }
.sel svg { width: 16px; height: 30px; }
.site { width: 91px; margin-left: 16px; } .pickers .sc { margin-left: 48px; } .scen { width: 146px; margin-left: 15px; }
.notice { margin-top: 49px; height: 125px; border-radius: 14px; background: #3870bf; color: #fff; font-size: 28px; line-height: 42px; padding: 20px 27px; letter-spacing: .68px; white-space: nowrap; }
h2.goals, h2.zoning { font-weight: 700; line-height: 40px; }
.goals { margin-top: 51px; }
.floor { display: flex; align-items: center; height: 68px; margin-top: 92px; white-space: nowrap; }
.floor label { margin-top: -2px; }
.num { width: 64px; height: 50px; line-height: 46px; border-bottom: 2px solid #3870bf; margin: 0 15px 0 16px; }
.cat { width: 340px; margin: 0 15px 0 16px; } .grp { width: 86px; margin-left: 15px; } .floor .box { margin-left: auto; }
.floor .box { position: relative; top: 1px; }
.setrow { display: flex; justify-content: flex-end; margin-top: 25px; }
.zoning { margin-top: 51px; }
.rules { margin-top: 20px; border-top: 2px solid #b0c6e5; }
.rules div { display: flex; justify-content: space-between; align-items: center; padding: 2px; border-bottom: 2px solid #b0c6e5; line-height: 48px; }
.rules dt, .rules dd { position: relative; top: -1px; }
.rules dd { text-align: right; }
.foot { position: absolute; left: 139px; bottom: 0; width: 1216px; height: 111px; background: rgba(255,255,255,.75); display: flex; justify-content: space-between; padding: 35px 2px 0 15px; }
.foot a { text-decoration: underline; }
```
